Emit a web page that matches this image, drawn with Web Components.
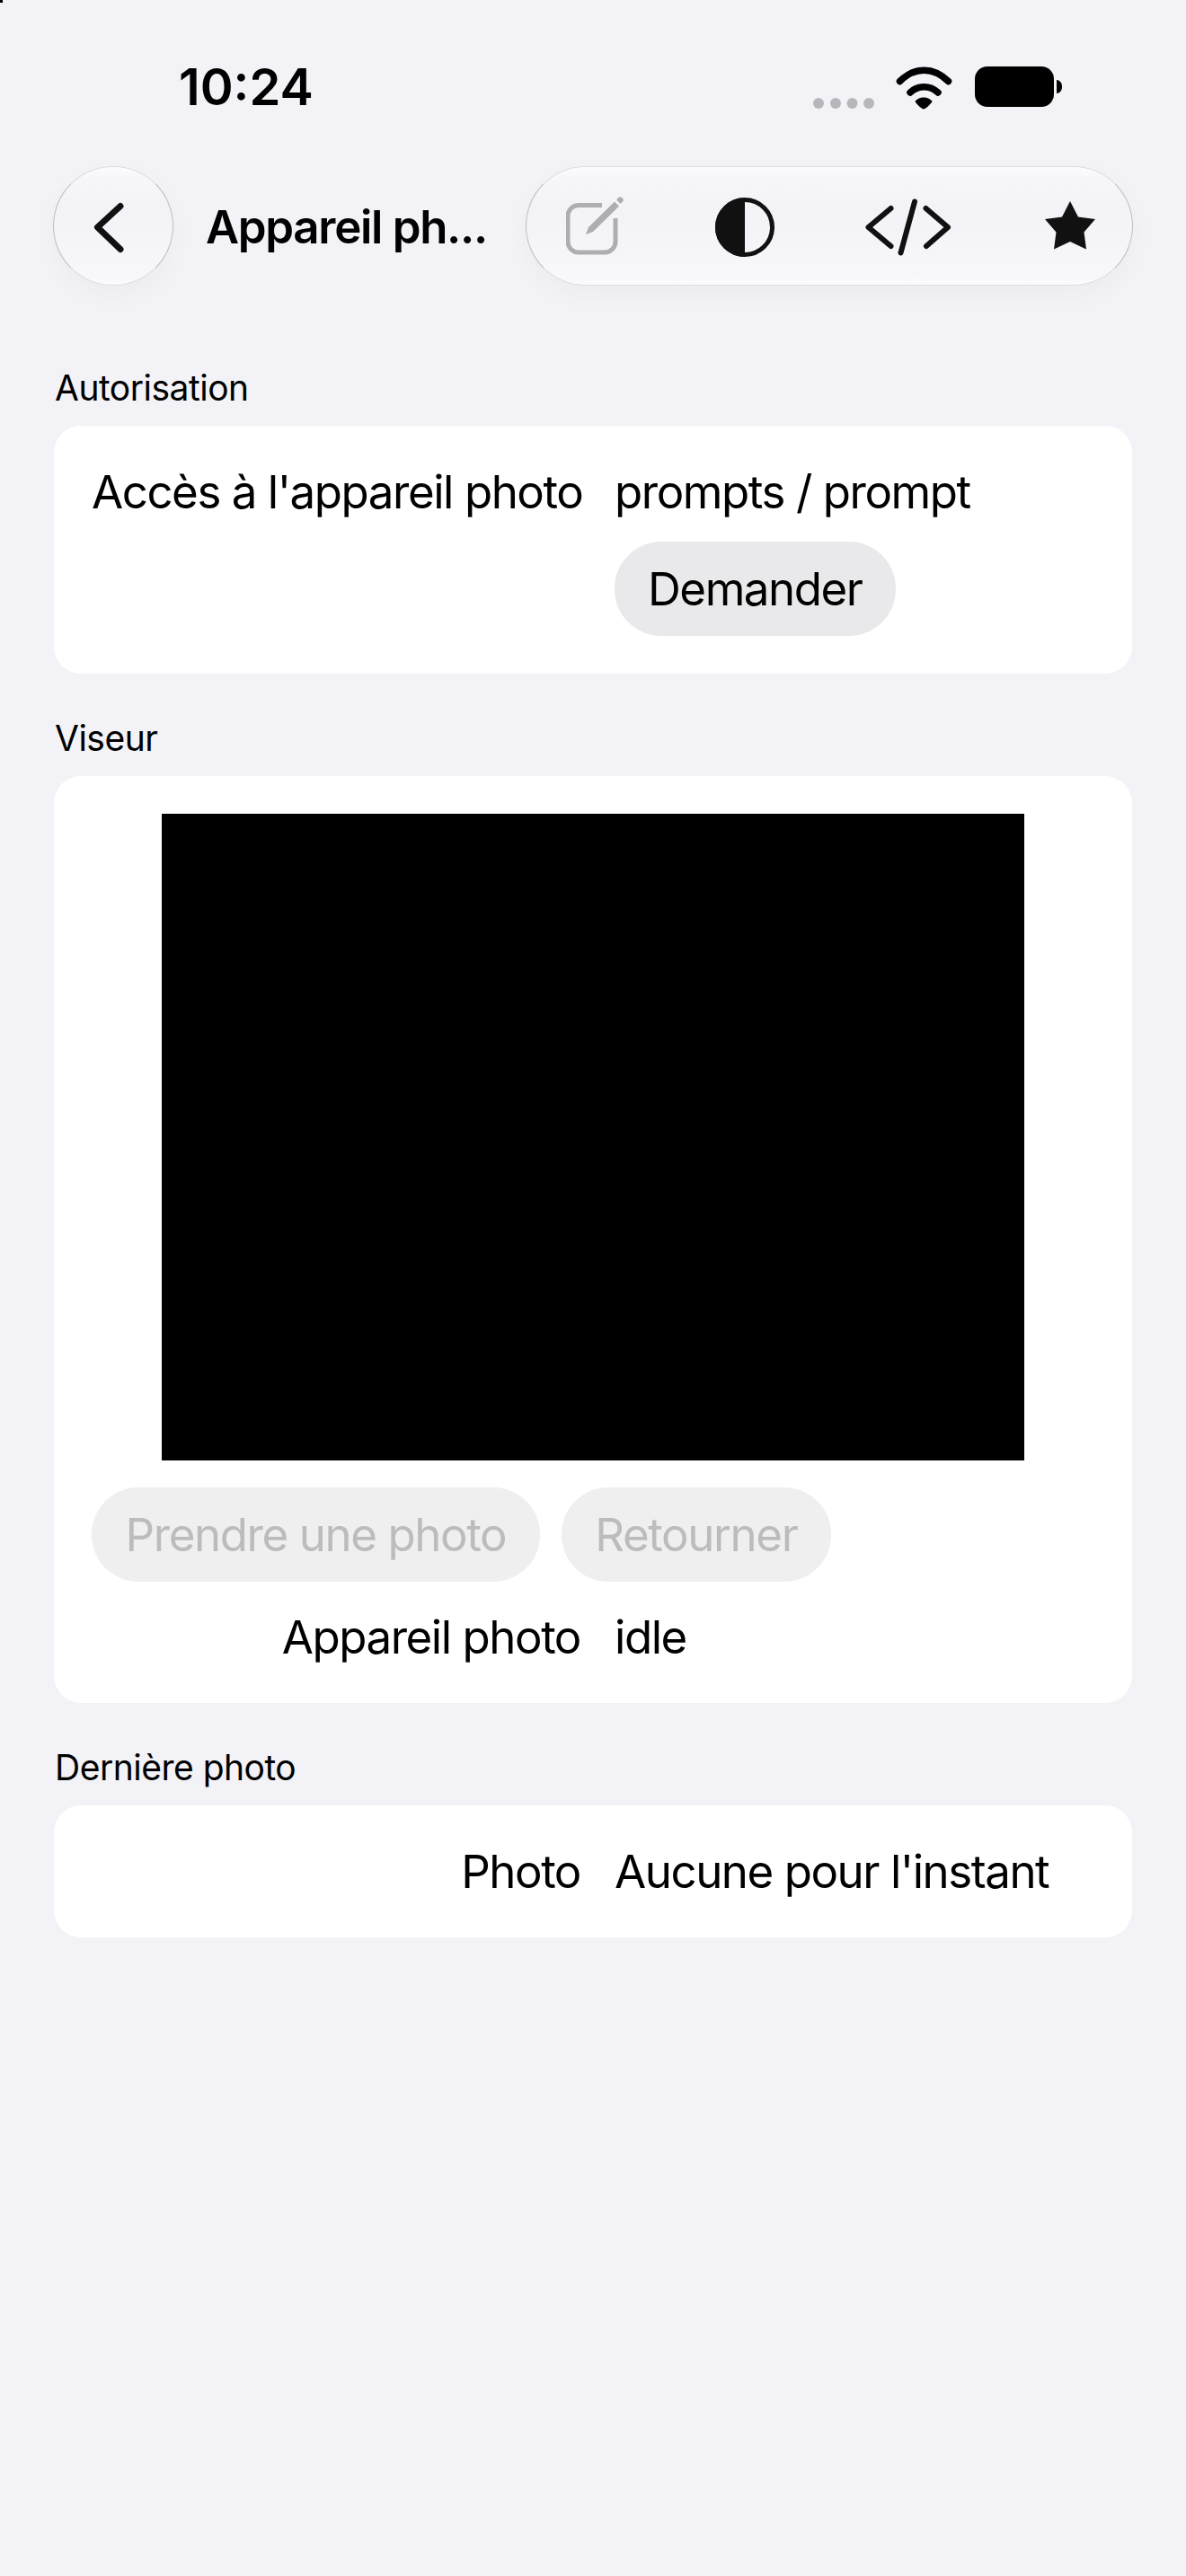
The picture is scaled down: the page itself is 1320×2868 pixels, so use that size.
<!DOCTYPE html>
<html lang="fr"><head><meta charset="utf-8"><title>Appareil photo</title>
<style>
html,body{margin:0;padding:0;background:#f2f2f7}
html{height:2868px;overflow:hidden}
body{width:1320px;height:2868px;overflow:hidden;font-family:Inter,"Liberation Sans",sans-serif;color:#000}
</style></head><body>
<phone-screen>
  <corner-mark></corner-mark>
  <status-bar time="10:24"></status-bar>
  <nav-bar title="Appareil ph..."></nav-bar>
  <form-section label="Autorisation" first>
    <kv-row label="Accès à l'appareil photo">
      <span>prompts / prompt</span>
      <pill-button>Demander</pill-button>
    </kv-row>
  </form-section>
  <form-section label="Viseur">
    <camera-view></camera-view>
    <button-row>
      <pill-button disabled>Prendre une photo</pill-button>
      <pill-button disabled>Retourner</pill-button>
    </button-row>
    <kv-row label="Appareil photo"><span>idle</span></kv-row>
  </form-section>
  <form-section label="Dernière photo">
    <kv-row label="Photo"><span>Aucune pour l'instant</span></kv-row>
  </form-section>
</phone-screen>
<script>
function def(name,html){
  customElements.define(name,class extends HTMLElement{
    connectedCallback(){
      if(this.shadowRoot)return;
      const r=this.attachShadow({mode:'open'});
      r.innerHTML=typeof html==='function'?html(this):html;
    }
  });
}
def('phone-screen',`<style>:host{display:block;width:1320px}</style><slot></slot>`);
def('corner-mark',`<style>:host{position:absolute;left:0;top:0;width:3px;height:3px;background:#000}</style>`);
def('status-bar',e=>`<style>
:host{display:flex;box-sizing:border-box;height:185px;padding:0 138px 0 199px;justify-content:space-between;align-items:flex-start}
.t{font:600 56px/68px Inter,"Liberation Sans",sans-serif;margin-top:63px;letter-spacing:0;color:#000}
svg{display:block;margin-top:74px}
</style><span class="t">${e.getAttribute('time')}</span>
<svg width="277" height="48" viewBox="905 74 277 48" aria-hidden="true">
<g fill="#b6b6bb"><circle cx="911" cy="115" r="6"/><circle cx="930" cy="115" r="6"/><circle cx="948.500" cy="115" r="6"/><circle cx="967" cy="115" r="6"/></g>
<g fill="none" stroke="#000" stroke-width="7.500" stroke-linecap="round"><path d="M1001.500 90.500C1018 74 1039 74 1055.500 90.500"/><path d="M1013 103C1022 94.500 1035 94.500 1044 103"/></g>
<path d="M1028 108.500c4 0 8 1.800 9.500 4.500 0 1-6 7.500-9.500 8.500-3.500-1-9.500-7.500-9.500-8.500 1.500-2.700 5.500-4.500 9.500-4.500z" fill="#000"/>
<rect x="1085" y="74" width="88" height="45" rx="14" fill="#000"/>
<path d="M1176 89c4 .6 6 3.500 6 7.500s-2 6.900-6 7.500z" fill="#000"/>
</svg>`);
def('nav-bar',e=>`<style>
:host{display:flex;box-sizing:border-box;height:133px;padding:0 59px;align-items:center}
.title{font:600 51px/62px Inter,"Liberation Sans",sans-serif;width:356px;margin-left:36px;white-space:nowrap;letter-spacing:-1.3px;color:#000;position:relative;top:1px}
glass-box svg{display:block}
</style>
<glass-box round><svg width="134" height="133" viewBox="59 185 134 133" aria-hidden="true"><path d="M134 229.500 108.500 253 134 277.500" fill="none" stroke="#111" stroke-width="7" stroke-linecap="round" stroke-linejoin="round"/></svg></glass-box>
<span class="title">${e.getAttribute('title')}</span>
<glass-box wide>
<svg width="64" height="133" viewBox="630 185 64 133" aria-hidden="true">
<path d="M670 228.500H644a12 12 0 0 0-12 12V269a12 12 0 0 0 12 12h29a12 12 0 0 0 12-12V243" fill="none" stroke="#aeaeb2" stroke-width="5"/>
<path d="M652 261l3-8 29-28.500 5 5-29 28.500z" fill="#aeaeb2"/><path d="M686 222.500l2.500-2.500c1-1 2.500-1 3.500 0l1 1c1 1 1 2.500 0 3.500l-2.500 2.500z" fill="#aeaeb2"/>
</svg>
<svg width="66" height="133" viewBox="795.500 185 66 133" aria-hidden="true">
<circle cx="828.500" cy="253" r="30.500" fill="none" stroke="#111" stroke-width="5"/><path d="M828.500 220a33 33 0 0 0 0 66z" fill="#111"/>
</svg>
<svg width="98.500" height="133" viewBox="963 185 98.500 133" aria-hidden="true">
<g fill="none" stroke="#111" stroke-width="6" stroke-linecap="round" stroke-linejoin="round"><path d="M991.500 232 966.500 253 991.500 274"/><path d="M1018 224.500 1002.500 281.500"/><path d="M1030.500 232 1055 253 1031 274"/></g>
</svg>
<svg width="56" height="133" viewBox="1163 185 56 133" aria-hidden="true">
<path d="M1191 224 1200 241.500 1219 244 1206.500 258.500 1209 277.500 1191 269 1173 277.500 1175.500 258.500 1163 244 1182 241.500z" fill="#111"/>
</svg>
</glass-box>`);
def('glass-box',`<style>
:host{display:flex;position:relative;box-sizing:border-box;height:133px;flex:none;align-items:center;border-radius:67px;
 background:linear-gradient(180deg,#fcfcfe 0,#f7f7fa 10%,#f3f3f7 35%,#f5f5f9 65%,#f8f8fc 92%,#fbfbfd 100%);
 box-shadow:0 10px 28px rgba(0,0,0,.03)}
:host::before{content:"";position:absolute;inset:0;border-radius:inherit;border:1.500px solid;border-color:#dcdcdf #bdbdc1 #dcdcdf #bdbdc1;pointer-events:none}
:host([round]){width:134px}
:host([wide]){width:676px;padding-left:45px;gap:101.500px}
</style><slot></slot>`);
def('form-section',e=>`<style>
:host{display:block;margin:0 60px;padding-top:48px}
:host([first]){padding-top:90px}
.l{font:400 39px/47px Inter,"Liberation Sans",sans-serif;letter-spacing:-.5px;margin:0 0 19px 1px;color:#000}
.c{background:#fff;border-radius:30px;padding:42px;display:flex;flex-direction:column;gap:30px}
</style><div class="l">${e.getAttribute('label')}</div><div class="c"><slot></slot></div>`);
def('kv-row',e=>`<style>
:host{display:grid;grid-template-columns:544px 1fr;column-gap:38px;font:400 51px/63px Inter,"Liberation Sans",sans-serif;letter-spacing:-1.45px;color:#000}
.k{text-align:right;white-space:nowrap}
.v{display:flex;flex-direction:column;align-items:flex-start;gap:24px;white-space:nowrap}
</style><span class="k">${e.getAttribute('label')}</span><div class="v"><slot></slot></div>`);
def('pill-button',`<style>
:host{display:inline-flex;box-sizing:border-box;height:105px;padding:0 37px;align-items:center;border-radius:52px;background:#e9e9eb;color:#000;font:400 51px/63px Inter,"Liberation Sans",sans-serif;letter-spacing:-1.45px;white-space:nowrap}
:host([disabled]){background:#efefef;color:#bcbcbe;letter-spacing:-1.4px;padding:0 37.500px}
</style><slot></slot>`);
def('button-row',`<style>:host{display:flex;gap:24px}</style><slot></slot>`);
def('camera-view',`<style>:host{display:block;width:960px;height:720px;margin:0 auto;background:#000}</style>`);
</script>
</body></html>
